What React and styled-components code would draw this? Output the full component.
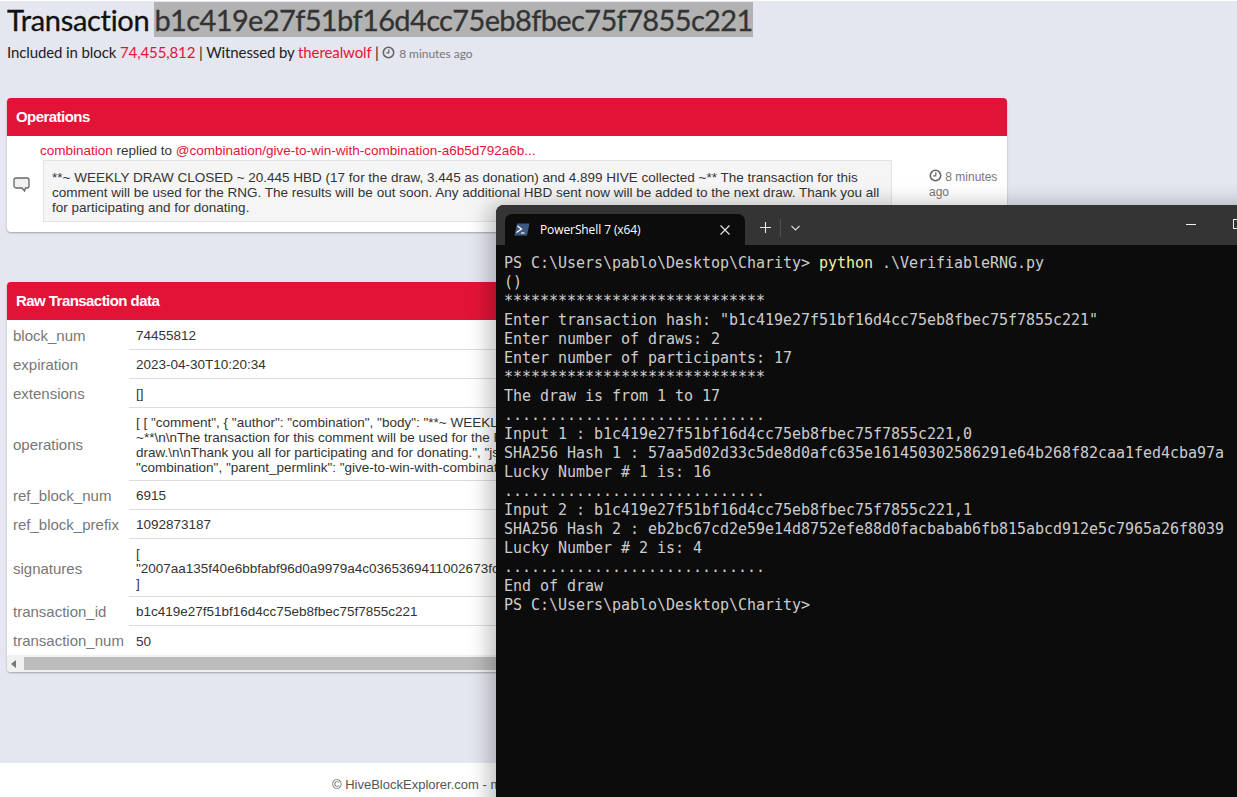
import React from 'react';
import styled, { createGlobalStyle } from 'styled-components';

const GlobalStyle = createGlobalStyle`
  html, body {
    margin: 0;
    padding: 0;
    height: 797px;
    overflow: hidden;
    background: #e4e6f0;
  }
`;

const Page = styled.div`
  position: relative;
  width: 1237px;
  height: 797px;
  overflow: hidden;
  background: #e4e6f0;
  font-family: 'Liberation Sans', Arial, sans-serif;
  display: flex;
  flex-direction: column;
`;

const Main = styled.main`
  flex: 1;
  padding: 1px 0 0 7px;
  border-top: 1px solid #fff;
`;

const Title = styled.h1`
  margin: 0;
  font-family: Lato, sans-serif;
  font-size: 29px;
  line-height: 36px;
  font-weight: 400;
  color: #111;
  letter-spacing: -0.3px;
  word-spacing: -2px;
  white-space: nowrap;
  -webkit-text-stroke: 0.3px #111;
`;

const Selected = styled.span`
  background: #b2b2b2;
  color: #333;
  letter-spacing: -0.63px;
  -webkit-text-stroke: 0.3px #333;
`;

const Meta = styled.p`
  margin: 4px 0 0;
  font-family: Lato, sans-serif;
  font-size: 15px;
  line-height: 20px;
  letter-spacing: -0.11px;
  color: #222;
  white-space: nowrap;
`;

const Link = styled.a`
  color: #e31337;
`;

const Ago = styled.span`
  color: #777;
  font-size: 12px;
  letter-spacing: -0.05px;
`;

const Panel = styled.section`
  width: 1000px;
  margin-top: ${(p) => p.$top}px;
  border-radius: 4px;
  background: #fff;
  box-shadow: 0 1px 2px rgba(0, 0, 0, 0.3);
`;

const PanelHead = styled.h2`
  margin: 0;
  height: 37px;
  padding-left: 9px;
  background: #e31337;
  border-bottom: 1px solid #b8283f;
  border-radius: 4px 4px 0 0;
  color: #fff;
  font-size: 15px;
  line-height: 37px;
  font-weight: 700;
  letter-spacing: -0.55px;
`;

const OpRow = styled.div`
  display: grid;
  grid-template-columns: 33px 852px 1fr;
  height: 96px;
  align-items: start;
`;

const OpIcon = styled.div`
  padding: 41px 0 0 6px;
`;

const OpBody = styled.div`
  padding-top: 5px;
  font-size: 13.5px;
  line-height: 19px;
  color: #333;
  white-space: nowrap;
`;

const Quote = styled.blockquote`
  margin: 0 0 0 3px;
  box-sizing: border-box;
  height: 62px;
  padding: 9px 7px 0 8px;
  background: #f5f5f5;
  border: 1px solid #e3e3e3;
  font-size: 13.5px;
  line-height: 15px;
  color: #333;
  white-space: normal;
`;

const OpTime = styled.div`
  padding: 33px 8px 0 37px;
  font-size: 12px;
  line-height: 15px;
  color: #777;
`;

const Table = styled.div`
  display: grid;
  grid-template-columns: 122px 1fr;
`;

const Label = styled.div`
  display: flex;
  align-items: center;
  height: ${(p) => p.$h}px;
  padding-left: 6px;
  font-size: 15px;
  color: #777;
  white-space: nowrap;
`;

const Value = styled.div`
  display: flex;
  flex-direction: column;
  justify-content: center;
  height: ${(p) => p.$h}px;
  box-sizing: border-box;
  padding: 1px 0 0 7px;
  border-bottom: ${(p) => p.$last ? 'none' : '1px solid #ddd'};
  font-size: 13.5px;
  line-height: 15px;
  color: #333;
  white-space: nowrap;
  overflow: hidden;
`;

const Scrollbar = styled.div`
  display: flex;
  align-items: center;
  height: 17px;
  background: #f1f1f1;
  border-radius: 0 0 4px 4px;
`;

const ScrollArrow = styled.div`
  width: 0;
  height: 0;
  margin: 0 8px 0 4px;
  border-style: solid;
  border-width: 4px 5px 4px 0;
  border-color: transparent #777 transparent transparent;
`;

const ScrollThumb = styled.div`
  flex: 1;
  height: 13px;
  background: #bcbcbc;
`;

const Footer = styled.footer`
  height: 34px;
  padding-left: 332px;
  background: #fff;
  font-size: 13px;
  line-height: 44px;
  color: #555;
  white-space: nowrap;
`;

const Terminal = styled.div`
  position: absolute;
  left: 496px;
  top: 205px;
  width: 800px;
  height: 640px;
  background: #0c0c0c;
  border-radius: 8px 0 0 0;
  box-shadow: -6px 0 22px rgba(0, 0, 0, 0.28);
`;

const TitleBar = styled.div`
  display: flex;
  align-items: flex-end;
  height: 40px;
  background: #343434;
  border-radius: 8px 0 0 0;
  color: #fff;
`;

const Tab = styled.div`
  display: flex;
  align-items: center;
  width: 240px;
  height: 31px;
  margin-left: 9px;
  box-sizing: border-box;
  padding: 0 15px 0 9px;
  background: #0c0c0c;
  border-radius: 7px 7px 0 0;
  font-family: 'Open Sans', sans-serif;
  font-size: 12px;
  font-weight: 500;
  letter-spacing: -0.1px;
`;

const TabLabel = styled.span`
  flex: 1;
  margin-left: 10px;
`;

const TabTools = styled.div`
  display: flex;
  align-items: center;
  height: 31px;
  padding: 0 0 2px 15px;
`;

const Divider = styled.div`
  width: 1px;
  height: 18px;
  margin: 0 10px 0 9px;
  background: #505050;
`;

const WindowButtons = styled.div`
  display: flex;
  align-items: center;
  gap: 37px;
  height: 38px;
  margin-left: 386px;
  padding-bottom: 2px;
`;

const Console = styled.pre`
  margin: 0;
  padding: 9px 0 0 8px;
  font-family: 'DejaVu Sans Mono', 'Liberation Mono', monospace;
  font-size: 15px;
  line-height: 19px;
  letter-spacing: -0.03px;
  color: #cccccc;
`;

const Cmd = styled.span`
  color: #f9f1a5;
`;

const CommentIcon = () => (
  <svg width="17" height="15" viewBox="0 0 17 15" fill="#f0f0f0" stroke="#666" strokeWidth="1.3">
    <path d="M3 1h11a2 2 0 0 1 2 2v6a2 2 0 0 1-2 2h-1.5l-1 3-2.5-3H3a2 2 0 0 1-2-2V3a2 2 0 0 1 2-2z" />
  </svg>
);

const ClockIcon = () => (
  <svg width="13" height="13" viewBox="0 0 13 13" fill="none" stroke="#666" strokeWidth="1.6" style={{ verticalAlign: '-1px' }}>
    <circle cx="6.5" cy="6.5" r="5.2" />
    <path d="M6.8 3.3v3.5H4.2" strokeWidth="1.2" />
  </svg>
);

const PsIcon = () => (
  <svg width="16" height="13" viewBox="0 0 16 13">
    <path d="M3 0.5h12.5L13 12.5H0.5z" fill="#3d5a80" />
    <path d="M3.5 3l4 3-5 3.5" fill="none" stroke="#fff" strokeWidth="1.3" />
    <path d="M7 10h3.5" stroke="#fff" strokeWidth="1.2" />
  </svg>
);

const CloseIcon = () => (
  <svg width="10" height="10" viewBox="0 0 10 10" stroke="#e8e8e8" strokeWidth="1.1">
    <path d="M0.5 0.5l9 9M9.5 0.5l-9 9" />
  </svg>
);

const PlusIcon = () => (
  <svg width="11" height="11" viewBox="0 0 11 11" stroke="#e8e8e8" strokeWidth="1.1">
    <path d="M5.5 0v11M0 5.5h11" />
  </svg>
);

const ChevronIcon = () => (
  <svg width="9" height="6" viewBox="0 0 9 6" fill="none" stroke="#ddd" strokeWidth="1.1">
    <path d="M0.5 1l4 4 4-4" />
  </svg>
);

const rows = [
  { key: 'block_num', h: 30, lines: ['74455812'] },
  { key: 'expiration', h: 29, lines: ['2023-04-30T10:20:34'] },
  { key: 'extensions', h: 29, lines: ['[]'] },
  {
    key: 'operations',
    h: 73,
    lines: [
      '[ [ "comment", { "author": "combination", "body": "**~ WEEKLY DRAW CLOSED ~ 20.445 HBD (17 for the draw, 3.445 as donation) and 4.899 HIVE collected',
      '~**\\n\\nThe transaction for this comment will be used for the RNG. The results will be out soon. Any additional HBD sent now will be added to the next',
      'draw.\\n\\nThank you all for participating and for donating.", "json_metadata": "{}", "parent_author":',
      '"combination", "parent_permlink": "give-to-win-with-combination-a6b5d792a6b"',
    ],
  },
  { key: 'ref_block_num', h: 29, lines: ['6915'] },
  { key: 'ref_block_prefix', h: 29, lines: ['1092873187'] },
  {
    key: 'signatures',
    h: 58,
    lines: ['[', '"2007aa135f40e6bbfabf96d0a9979a4c0365369411002673fc8a1d2e6b0c4f7a"', ']'],
  },
  { key: 'transaction_id', h: 29, lines: ['b1c419e27f51bf16d4cc75eb8fbec75f7855c221'] },
  { key: 'transaction_num', h: 29, lines: ['50'], last: true },
];

const rule = '*'.repeat(29);
const dots = '.'.repeat(29);

const consoleLines = `()
${rule}
Enter transaction hash: "b1c419e27f51bf16d4cc75eb8fbec75f7855c221"
Enter number of draws: 2
Enter number of participants: 17
${rule}
The draw is from 1 to 17
${dots}
Input 1 : b1c419e27f51bf16d4cc75eb8fbec75f7855c221,0
SHA256 Hash 1 : 57aa5d02d33c5de8d0afc635e161450302586291e64b268f82caa1fed4cba97a
Lucky Number # 1 is: 16
${dots}
Input 2 : b1c419e27f51bf16d4cc75eb8fbec75f7855c221,1
SHA256 Hash 2 : eb2bc67cd2e59e14d8752efe88d0facbabab6fb815abcd912e5c7965a26f8039
Lucky Number # 2 is: 4
${dots}
End of draw
PS C:\\Users\\pablo\\Desktop\\Charity>`;

const App = () => (
  <Page>
    <GlobalStyle />
    <Main>
      <Title>
        Transaction <Selected>b1c419e27f51bf16d4cc75eb8fbec75f7855c221</Selected>
      </Title>
      <Meta>
        Included in block <Link>74,455,812</Link> | Witnessed by <Link>therealwolf</Link> | <ClockIcon /> <Ago>8 minutes ago</Ago>
      </Meta>

      <Panel $top={34}>
        <PanelHead>Operations</PanelHead>
        <OpRow>
          <OpIcon><CommentIcon /></OpIcon>
          <OpBody>
            <Link>combination</Link> replied to <Link>@combination/give-to-win-with-combination-a6b5d792a6b...</Link>
            <Quote>
              **~ WEEKLY DRAW CLOSED ~ 20.445 HBD (17 for the draw, 3.445 as donation) and 4.899 HIVE collected ~** The transaction for this comment will be used for the RNG. The results will be out soon. Any additional HBD sent now will be added to the next draw. Thank you all for participating and for donating.
            </Quote>
          </OpBody>
          <OpTime><ClockIcon /> 8 minutes ago</OpTime>
        </OpRow>
      </Panel>

      <Panel $top={50}>
        <PanelHead>Raw Transaction data</PanelHead>
        <Table>
          {rows.map((row) => (
            <React.Fragment key={row.key}>
              <Label $h={row.h}>{row.key}</Label>
              <Value $h={row.h} $last={row.last}>
                {row.lines.map((line) => <div key={line}>{line}</div>)}
              </Value>
            </React.Fragment>
          ))}
        </Table>
        <Scrollbar>
          <ScrollArrow />
          <ScrollThumb />
        </Scrollbar>
      </Panel>
    </Main>
    <Footer>© HiveBlockExplorer.com - made with love by the community</Footer>

    <Terminal>
      <TitleBar>
        <Tab>
          <PsIcon />
          <TabLabel>PowerShell 7 (x64)</TabLabel>
          <CloseIcon />
        </Tab>
        <TabTools>
          <PlusIcon />
          <Divider />
          <ChevronIcon />
        </TabTools>
        <WindowButtons>
          <svg width="10" height="1"><rect width="10" height="1" fill="#eee" /></svg>
          <svg width="10" height="10" fill="none" stroke="#eee"><rect x="0.5" y="0.5" width="9" height="9" /></svg>
        </WindowButtons>
      </TitleBar>
      <Console>PS C:\Users\pablo\Desktop\Charity&gt; <Cmd>python</Cmd> .\VerifiableRNG.py{'\n'}{consoleLines}</Console>
    </Terminal>
  </Page>
);

export default App;
